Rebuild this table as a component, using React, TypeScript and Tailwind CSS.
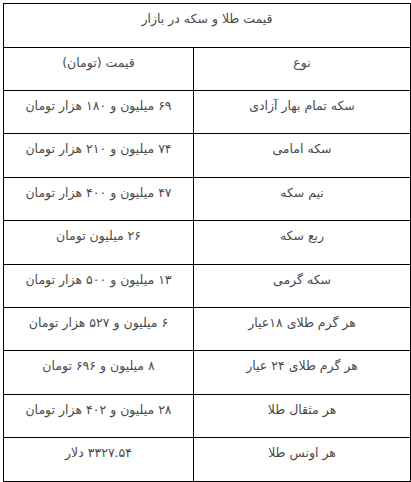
import React from "react";

const rows: Array<[string, string]> = [
  ["سکه تمام بهار آزادی", "۶۹ میلیون و ۱۸۰ هزار تومان"],
  ["سکه امامی", "۷۴ میلیون و ۲۱۰ هزار تومان"],
  ["نیم سکه", "۴۷ میلیون و ۴۰۰ هزار تومان"],
  ["ربع سکه", "۲۶ میلیون تومان"],
  ["سکه گرمی", "۱۳ میلیون و ۵۰۰ هزار تومان"],
  ["هر گرم طلای ۱۸عیار", "۶ میلیون و ۵۲۷ هزار تومان"],
  ["هر گرم طلای ۲۴ عیار", "۸ میلیون و ۶۹۶ تومان"],
  ["هر مثقال طلا", "۲۸ میلیون و ۴۰۲ هزار تومان"],
  ["هر اونس طلا", "۳۳۲۷.۵۴ دلار"],
];

const cell = "border border-black align-top text-center pt-[6px] leading-[18px]";

export default function App() {
  return (
    <div className="bg-white w-[411px] h-[482px] pt-[3px] pl-[3px] font-['Tahoma','DejaVu_Sans',sans-serif] text-[12.5px] text-[#4a4a4a]">
      <table dir="rtl" className="w-[407px] border-collapse border border-black table-fixed">
        <colgroup>
          <col className="w-[217px]" />
          <col className="w-[190px]" />
        </colgroup>
        <tbody>
          <tr className="h-[44px]">
            <td colSpan={2} className={cell}>
              قیمت طلا و سکه در بازار
            </td>
          </tr>
          <tr className="h-[43px]">
            <td className={cell}>نوع</td>
            <td className={cell}>قیمت (تومان)</td>
          </tr>
          {rows.map(([name, price]) => (
            <tr key={name} className="h-[43.4px]">
              <td className={cell}>{name}</td>
              <td className={cell}>{price}</td>
            </tr>
          ))}
        </tbody>
      </table>
    </div>
  );
}
